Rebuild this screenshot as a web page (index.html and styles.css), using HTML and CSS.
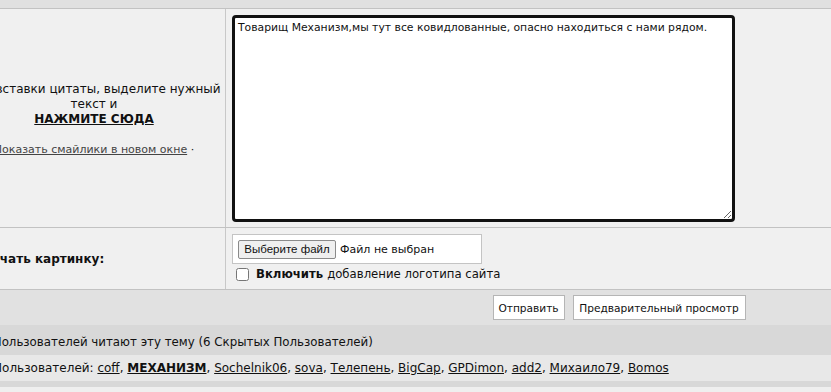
FILE: index.html
```html
<!DOCTYPE html>
<html lang="ru">
<head>
  <meta charset="UTF-8">
  <title>Ответ в теме</title>
  <link rel="stylesheet" href="styles.css">
</head>
<body>
  <div class="page">
    <div class="topbar"></div>

    <div class="row row-post">
      <div class="label label-center">
        <p>Для вставки цитаты, выделите нужный текст и<br><a href="#" class="quote-link">НАЖМИТЕ СЮДА</a></p>
        <p class="smiles"><a href="#">Показать смайлики в новом окне</a> &middot;</p>
      </div>
      <div class="field">
        <textarea class="post-text">Товарищ Механизм,мы тут все ковидлованные, опасно находиться с нами рядом.</textarea>
      </div>
    </div>

    <div class="row row-upload">
      <div class="label label-left"><b>Закачать картинку:</b></div>
      <div class="field">
        <div class="filebox">
          <button type="button" class="filebtn">Выберите файл</button>
          <span>Файл не выбран</span>
        </div>
        <label class="logo-check"><input type="checkbox"> <b>Включить</b> добавление логотипа сайта</label>
      </div>
    </div>

    <div class="actions">
      <button type="button" class="btn btn-send">Отправить</button>
      <button type="button" class="btn btn-preview">Предварительный просмотр</button>
    </div>

    <div class="readers">16 Пользователей читают эту тему (6 Скрытых Пользователей)</div>
    <div class="users">10 Пользователей: <a href="#">coff</a>, <a href="#"><b>МЕХАНИЗМ</b></a>, <a href="#">Sochelnik06</a>, <a href="#">sova</a>, <a href="#">Телепень</a>, <a href="#">BigCap</a>, <a href="#">GPDimon</a>, <a href="#">add2</a>, <a href="#">Михаило79</a>, <a href="#">Bomos</a></div>
    <div class="footbar"></div>
  </div>
</body>
</html>
```

FILE: styles.css
```css
* {
  margin: 0;
  padding: 0;
  box-sizing: border-box;
}
html, body {
  overflow: hidden;
  background: #efefef;
}
body {
  font-family: "DejaVu Sans", Verdana, sans-serif;
  font-size: 11px;
  color: #111;
}
a {
  color: #111;
}
.page {
  width: 1312px;
  margin-left: -37px;
}
.topbar {
  height: 9px;
  background: #e0e0e0;
  border-bottom: 1px solid #c2c2c2;
}
.row {
  display: grid;
  grid-template-columns: 263px 1fr;
  background: #f0f0f0;
  border-bottom: 1px solid #c2c2c2;
}
.label {
  border-right: 1px solid #c8c8c8;
  padding: 4px;
  display: flex;
  flex-direction: column;
  justify-content: center;
}
.label-center {
  text-align: center;
  font-size: 12px;
  line-height: 15px;
  padding-top: 6px;
}
.quote-link {
  font-weight: bold;
}
.smiles {
  margin-top: 15px;
  font-size: 11px;
}
.smiles a {
  color: #444;
}
.label-left {
  font-size: 12px;
}
.field {
  padding: 6px;
}
.row-post .field {
  padding: 6px 6px 5px;
}
.post-text {
  display: block;
  width: 503px;
  height: 207px;
  border: 3px solid #111;
  border-radius: 4px;
  padding: 3px;
  font-family: inherit;
  font-size: 10.8px;
  line-height: 14px;
  background: #fff;
  color: #111;
}
.row-upload .field {
  padding: 6px 6px 5px;
}
.filebox {
  width: 250px;
  height: 30px;
  background: #fff;
  border: 1px solid #c4c4c4;
  display: flex;
  align-items: center;
  gap: 4px;
  padding-left: 5px;
  font-size: 11px;
}
.filebtn {
  font-family: "Liberation Sans", Arial, sans-serif;
  font-size: 11.5px;
  height: 19px;
  width: 98px;
  border: 1px solid #8a8a8a;
  border-radius: 2px;
  background: #efefef;
  color: #111;
}
.logo-check {
  display: flex;
  align-items: center;
  gap: 4px;
  height: 20px;
  padding-left: 4px;
  font-size: 11.7px;
}
.logo-check input {
  width: 13px;
  height: 13px;
  margin-right: 3px;
}
.actions {
  background: #e1e1e1;
  height: 35px;
  display: flex;
  justify-content: center;
  align-items: center;
  gap: 8px;
}
.btn {
  font-family: inherit;
  font-size: 10.6px;
  background: #fff;
  border: 1px solid #b5b5b5;
  height: 25px;
  color: #111;
}
.btn-send {
  width: 72px;
}
.btn-preview {
  width: 173px;
}
.readers {
  background: #d8d8d8;
  height: 30px;
  line-height: 35px;
  padding-left: 11px;
  font-size: 11.8px;
}
.users {
  background: #e8e8e8;
  height: 26px;
  line-height: 27px;
  padding-left: 11px;
  font-size: 12px;
}
.footbar {
  height: 6px;
  background: #d8d8d8;
}
```
